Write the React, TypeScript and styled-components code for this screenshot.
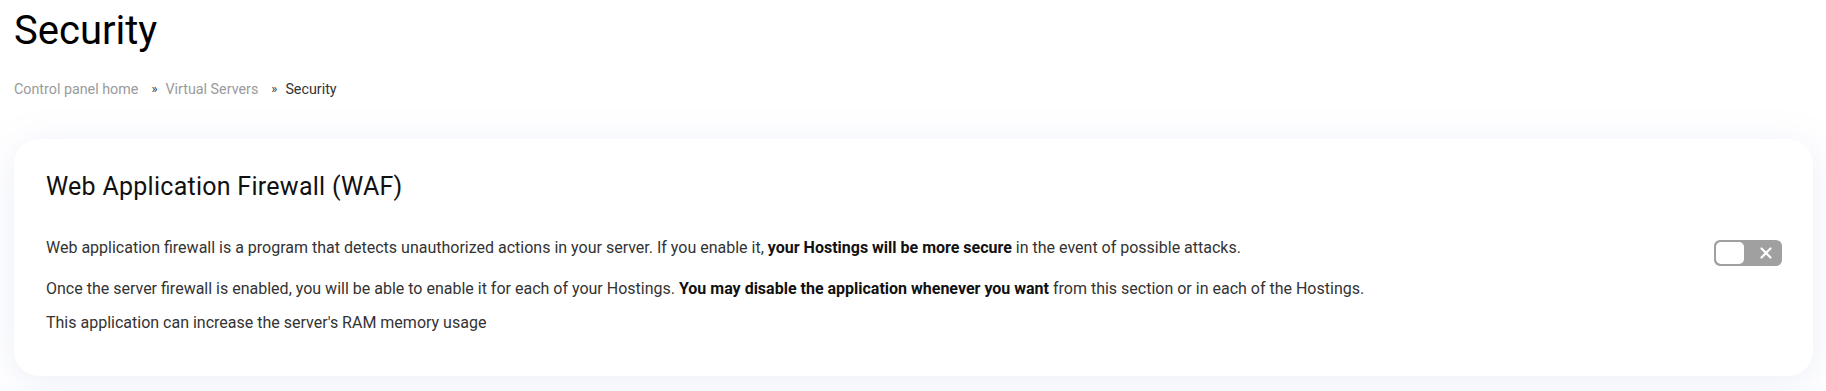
import React, { useState } from 'react'
import styled, { createGlobalStyle } from 'styled-components'

const GlobalStyle = createGlobalStyle`
  html, body {
    margin: 0;
    padding: 0;
    background: #ffffff;
    font-family: Roboto, 'Liberation Sans', Arial, sans-serif;
    color: #222;
  }
`

const Page = styled.div`
  padding: 0 13px 16px 14px;
`

const Title = styled.h1`
  margin: 0;
  padding-top: 7px;
  font-size: 40px;
  font-weight: 400;
  line-height: 48px;
  color: #000;
`

const Breadcrumb = styled.nav`
  display: flex;
  align-items: center;
  gap: 7px;
  margin-top: 26px;
  font-size: 14.3px;
  line-height: 16px;
`

const Crumb = styled.a<{ $current?: boolean }>`
  color: ${p => (p.$current ? '#333' : '#9a9a9a')};
  text-decoration: none;
`

const Sep = styled.span`
  color: #333;
  font-size: 13px;
  padding: 0 1px 0 6px;
`

const Card = styled.section`
  margin-top: 42px;
  background: #fff;
  border-radius: 25px;
  box-shadow: 0 6px 40px rgba(110, 125, 200, 0.13);
  padding: 32px 31px 42px 32px;
`

const CardTitle = styled.h2`
  margin: 0 0 34px;
  font-size: 25px;
  font-weight: 400;
  letter-spacing: 0.27px;
  line-height: 32px;
  color: #111;
`

const Row = styled.div`
  display: flex;
  justify-content: space-between;
  align-items: flex-start;
  gap: 40px;
`

const Text = styled.div`
  font-size: 16px;
  line-height: 22px;
  color: #333;

  p {
    margin: 0 0 12px;
  }
  p:first-child {
    margin-bottom: 19px;
  }
  p:last-child {
    margin-bottom: 0;
  }
  b {
    color: #111;
    font-weight: 700;
  }
`

const Switch = styled.button<{ $on: boolean }>`
  position: relative;
  flex: none;
  width: 68px;
  height: 26px;
  margin-top: 3px;
  padding: 0;
  border: none;
  border-radius: 6px;
  background: ${p => (p.$on ? '#4caf50' : '#a0a0a0')};
  cursor: pointer;
`

const Knob = styled.span<{ $on: boolean }>`
  position: absolute;
  top: 2px;
  left: ${p => (p.$on ? '38px' : '2px')};
  width: 28px;
  height: 22px;
  border-radius: 5px;
  background: #fff;
`

const Mark = styled.svg<{ $on: boolean }>`
  position: absolute;
  top: 7px;
  left: ${p => (p.$on ? '12px' : '46px')};
`

export default function App() {
  const [on, setOn] = useState(false)

  return (
    <Page>
      <GlobalStyle />
      <Title>Security</Title>
      <Breadcrumb>
        <Crumb href="#">Control panel home</Crumb>
        <Sep>»</Sep>
        <Crumb href="#">Virtual Servers</Crumb>
        <Sep>»</Sep>
        <Crumb $current>Security</Crumb>
      </Breadcrumb>
      <Card>
        <CardTitle>Web Application Firewall (WAF)</CardTitle>
        <Row>
          <Text>
            <p>
              Web application firewall is a program that detects unauthorized actions in your
              server. If you enable it, <b>your Hostings will be more secure</b> in the event of
              possible attacks.
            </p>
            <p>
              Once the server firewall is enabled, you will be able to enable it for each of your
              Hostings. <b>You may disable the application whenever you want</b> from this section
              or in each of the Hostings.
            </p>
            <p>This application can increase the server's RAM memory usage</p>
          </Text>
          <Switch $on={on} onClick={() => setOn(!on)} aria-label="Toggle WAF">
            <Knob $on={on} />
            <Mark $on={on} width="12" height="12" viewBox="0 0 12 12">
              <path
                d="M1.5 1.5 L10.5 10.5 M10.5 1.5 L1.5 10.5"
                stroke="#fff"
                strokeWidth="2.2"
                strokeLinecap="round"
              />
            </Mark>
          </Switch>
        </Row>
      </Card>
    </Page>
  )
}
